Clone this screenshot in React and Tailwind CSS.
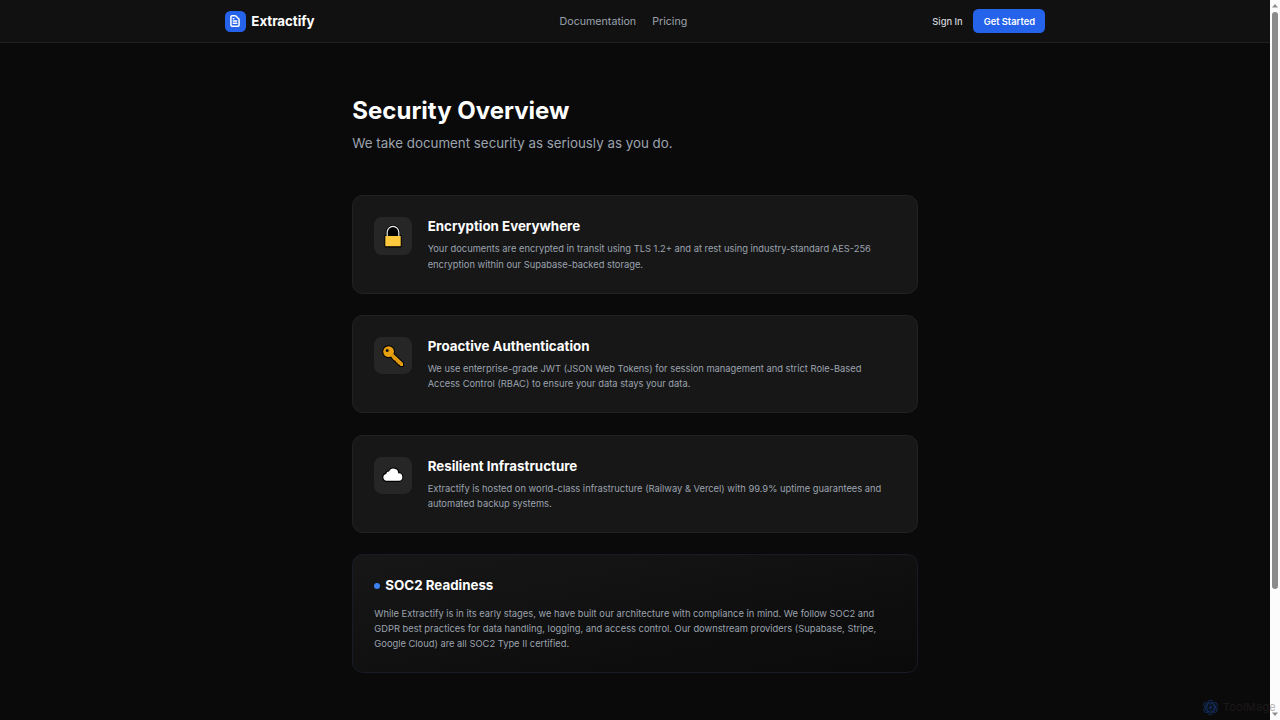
const LockIcon = () => (
  <svg viewBox="0 0 24 24" className="h-6 w-6">
    <path d="M6.2 12V8.3a5.8 6 0 0 1 11.6 0V12z" fill="#000" stroke="#000" strokeWidth="2.6" />
    <rect x="3.4" y="10.9" width="17.2" height="12.5" rx="0.8" fill="#000" />
    <path d="M6.2 12V8.3a5.8 6 0 0 1 11.6 0V12" fill="none" stroke="#e8ebee" strokeWidth="1.2" />
    <rect x="4.3" y="12" width="15.4" height="10.2" fill="#ffc83d" />
  </svg>
);

const KeyIcon = () => (
  <svg viewBox="0 0 24 24" className="h-6 w-6">
    <g stroke="#000" strokeWidth="2" strokeLinejoin="round">
      <circle cx="7.6" cy="7.6" r="5.4" />
      <path d="M10 12.500l2.500-2.500 9.500 9v3h-2.600l-1-1.500-1.500-.3-.4-1.500-1.500-.4-.4-1.600-1.700-.5z" />
    </g>
    <g fill="#e8a010">
      <circle cx="7.6" cy="7.6" r="5.4" />
      <path d="M10 12.500l2.500-2.500 9.500 9v3h-2.600l-1-1.500-1.500-.3-.4-1.500-1.500-.4-.4-1.600-1.700-.5z" />
    </g>
    <circle cx="6.200" cy="6.400" r="1.500" fill="#111" />
    <path d="M12 12l8.800 8.500" stroke="#c87d10" strokeWidth="0.7" />
  </svg>
);

const CloudIcon = () => (
  <svg viewBox="0 0 24 24" className="h-6 w-6">
    <path
      d="M5.500 17.800a3.500 3.500 0 0 1-.4-6.900 3 3 0 0 1 3-2.300 4.700 4.700 0 0 1 9.100 1.800A3.700 3.700 0 0 1 18 17.800z"
      fill="#fff"
      stroke="#000"
      strokeWidth="2.200"
      strokeLinejoin="round"
      paintOrder="stroke"
    />
  </svg>
);

const sections = [
  {
    title: 'Encryption Everywhere',
    text: 'Your documents are encrypted in transit using TLS 1.2+ and at rest using industry-standard AES-256 encryption within our Supabase-backed storage.',
    icon: LockIcon,
  },
  {
    title: 'Proactive Authentication',
    text: 'We use enterprise-grade JWT (JSON Web Tokens) for session management and strict Role-Based Access Control (RBAC) to ensure your data stays your data.',
    icon: KeyIcon,
  },
  {
    title: 'Resilient Infrastructure',
    text: 'Extractify is hosted on world-class infrastructure (Railway & Vercel) with 99.9% uptime guarantees and automated backup systems.',
    icon: CloudIcon,
  },
];

const Header = () => (
  <header className="h-[43.33px] border-b border-[#1e1e1e] bg-[#111111]">
    <div className="mx-auto flex h-full w-[820.6px] items-center justify-between">
      <div className="flex items-center gap-[5.33px]">
        <div className="flex h-[21.33px] w-[21.33px] items-center justify-center rounded-[5.33px] bg-[#2563eb]">
          <svg
            viewBox="0 0 24 24"
            className="h-[14px] w-[14px]"
            fill="none"
            stroke="#fff"
            strokeWidth="2.6"
            strokeLinecap="round"
            strokeLinejoin="round"
          >
            <path d="M9 12h6m-6 4h6m2 5H7a2 2 0 01-2-2V5a2 2 0 012-2h5.586a1 1 0 01.707.293l5.414 5.414a1 1 0 01.293.707V19a2 2 0 01-2 2z" />
            <path d="M9 8h1" />
          </svg>
        </div>
        <span className="pt-px text-[13.33px] font-bold tracking-[-0.003em] text-white">Extractify</span>
      </div>

      <nav className="flex items-center gap-4 pt-[1.5px] text-[10.67px] text-[#9ca3af]">
        <a href="#docs">Documentation</a>
        <a href="#pricing">Pricing</a>
      </nav>

      <div className="flex items-center gap-[10.67px] text-[9.33px]">
        <a href="#signin" className="pt-px font-medium text-[#d1d5db]">Sign In</a>
        <button className="h-6 rounded-[5.33px] bg-[#2563eb] px-[10.3px] pt-px font-semibold text-white">
          Get Started
        </button>
      </div>
    </div>
  </header>
);

const Scrollbar = () => (
  <div className="flex w-[10px] shrink-0 flex-col items-center bg-[#fcfcfc]">
    <svg viewBox="0 0 10 12" className="h-3 w-[10px]">
      <path d="M5 4l3 3.5H2z" fill="#8b8b8b" />
    </svg>
    <div className="h-[577px] w-[6px] rounded-full bg-[#8b8b8b]" />
    <div className="grow" />
    <svg viewBox="0 0 10 12" className="h-3 w-[10px]">
      <path d="M5 8l3-3.5H2z" fill="#8b8b8b" />
    </svg>
  </div>
);

const Watermark = () => (
  <div className="absolute right-[4px] bottom-[4px] flex items-center gap-[4px]">
    <svg viewBox="0 0 18 18" className="h-[17px] w-[17px]" fill="none" stroke="#142d5c" strokeWidth="1">
      {[0, 60, 120, 180, 240, 300].map((angle) => (
        <path key={angle} transform={`rotate(${angle} 9 9)`} d="M6 8.500V4.300a3.200 3.200 0 0 1 5.800-1.700M6 5.500l3.500-2 3.800 2.200" />
      ))}
      <circle cx="9" cy="9" r="1.3" fill="#142d5c" />
    </svg>
    <span className="text-[11px] leading-[17px] tracking-[0.02em] text-[#3a3030]/40">ToolMage</span>
  </div>
);

export default function App() {
  return (
    <div className="relative flex h-[720px] w-[1280px] overflow-hidden bg-[#0a0a0a] font-['Inter',sans-serif]">
      <div className="grow">
        <Header />

        <main className="mx-auto w-[565.33px] pt-[53.5px]">
          <h1 className="mb-[9.34px] text-[24px] leading-[28px] font-bold text-white">
            Security Overview
          </h1>
          <p className="mb-[42.67px] text-[13.33px] leading-[18.67px] text-[#9ca3af]">
            We take document security as seriously as you do.
          </p>

          <div className="flex flex-col gap-[21.33px]">
            {sections.map(({ title, text, icon: Icon }) => (
              <section
                key={title}
                className="flex h-[98.33px] gap-4 rounded-[10.67px] border border-[#222222] bg-[#171717] p-[21px]"
              >
                <div className="flex h-[37.33px] w-[37.33px] shrink-0 items-center justify-center rounded-[8px] bg-[#262626]">
                  <Icon />
                </div>
                <div>
                  <h2 className="mb-[5.33px] text-[13.33px] leading-[18.67px] font-bold text-white">{title}</h2>
                  <p className="text-[9.33px] leading-[15.17px] text-[#9ca3af]">{text}</p>
                </div>
              </section>
            ))}

            {/* Compliance */}
            <section className="h-[118.83px] rounded-[10.67px] border border-[#171c27] bg-linear-to-br from-[#171717] to-[#0a0a0a] p-[21px]">
              <h2 className="mb-[9.67px] flex items-center gap-[5px] text-[13.33px] leading-[19.67px] font-bold text-white">
                <span className="h-[6px] w-[6px] rounded-full bg-[#3b82f6]" />
                SOC2 Readiness
              </h2>
              <p className="text-[9.33px] leading-[15.17px] text-[#9ca3af]">
                While Extractify is in its early stages, we have built our architecture with compliance in mind. We
                follow SOC2 and GDPR best practices for data handling, logging, and access control. Our downstream
                providers (Supabase, Stripe, Google Cloud) are all SOC2 Type II certified.
              </p>
            </section>
          </div>
        </main>
      </div>
      <Scrollbar />
      <Watermark />
    </div>
  );
}
